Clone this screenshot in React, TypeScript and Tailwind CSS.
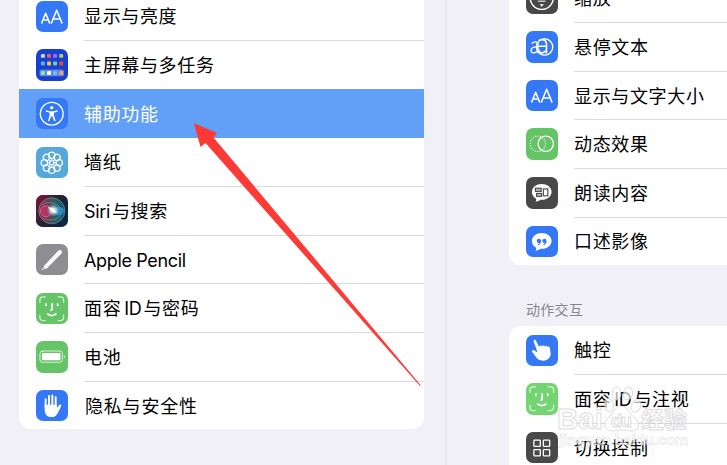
import type { ReactNode } from 'react';

const WHITE = { fill: 'none', stroke: '#fff', strokeLinecap: 'round', strokeLinejoin: 'round' } as const;

function Svg({ children }: { children: ReactNode }) {
  return <svg viewBox="0 0 32 32" className="size-full">{children}</svg>;
}

function TextSize() {
  return (
    <Svg>
      <path {...WHITE} strokeWidth="1.6" d="M5.8 22.4 9.8 12.6 13.8 22.4M7.1 19.3h5.4M15.7 22.4 21 9.4 26.3 22.4M17.4 18.3h7.2" />
    </Svg>
  );
}

function HomeScreen() {
  const rows = [
    ['#d8d5ce', '#ee5b6c', '#a768f5', '#a8d05a'],
    ['#55b7f5', '#f8c243', '#62d6a5', '#ee4b38'],
    ['#7ff08a', '#ffffff', '#5cc4fa', '#f2a25c'],
  ];
  const ys = [5, 12.7, 22.3];
  return (
    <Svg>
      <rect x="3.6" y="20.8" width="24.8" height="7" rx="2" fill="#6783e2" />
      {rows.map((row, r) =>
        row.map((c, i) => <rect key={c} x={5 + i * 6.2} y={ys[r]} width="4" height="4" rx="1" fill={c} />),
      )}
    </Svg>
  );
}

function Accessibility() {
  return (
    <Svg>
      <circle cx="16" cy="16" r="11.6" {...WHITE} strokeWidth="1.4" />
      <circle cx="16" cy="9.8" r="1.7" fill="#fff" />
      <path d="M10.2 12.4 14 13.4h4l3.8-1 .4 1.2-4 1.3v3l1.7 5.3-1.3.5-2.1-5.2h-1l-2.1 5.2-1.3-.5 1.7-5.3v-3l-4-1.3z" fill="#fff" />
    </Svg>
  );
}

function Wallpaper() {
  const petals = [0, 45, 90, 135, 180, 225, 270, 315];
  return (
    <Svg>
      {petals.map((a) => (
        <circle key={a} cx="16" cy="8.4" r="3.2" {...WHITE} strokeWidth="1.25" transform={`rotate(${a} 16 16)`} />
      ))}
      {petals.map((a) => (
        <path key={a} d="M16 11.8V14" {...WHITE} strokeWidth="1" transform={`rotate(${a} 16 16)`} />
      ))}
      <circle cx="16" cy="16" r="2.3" {...WHITE} strokeWidth="1" />
    </Svg>
  );
}

function Siri() {
  return (
    <Svg>
      <defs>
        <linearGradient id="siriBack" x1="0" y1="0.2" x2="1" y2="0.8">
          <stop offset="0" stopColor="#7a1438" />
          <stop offset=".45" stopColor="#252333" />
          <stop offset="1" stopColor="#0a2747" />
        </linearGradient>
        <linearGradient id="siriOrb" x1="0" y1="0.6" x2="1" y2="0.5">
          <stop offset="0" stopColor="#c02458" />
          <stop offset=".4" stopColor="#7a4a68" />
          <stop offset=".65" stopColor="#2f7478" />
          <stop offset="1" stopColor="#145c98" />
        </linearGradient>
        <radialGradient id="siriGlow">
          <stop offset="0" stopColor="#fff" />
          <stop offset=".3" stopColor="#e8ffff" stopOpacity=".85" />
          <stop offset="1" stopColor="#8ce9e8" stopOpacity="0" />
        </radialGradient>
      </defs>
      <rect width="32" height="32" fill="url(#siriBack)" />
      <circle cx="16" cy="16" r="13.2" fill="url(#siriOrb)" fillOpacity=".72" stroke="#52a58e" strokeOpacity=".8" strokeWidth="1" />
      <circle cx="10" cy="16.5" r="5.6" fill="#e4386f" fillOpacity=".5" stroke="#f0709a" strokeWidth=".7" />
      <path d="M16 16c4-5 10-5 12.5-1-1 7-7 8-12.5 1z" fill="#3a9fdd" opacity=".7" />
      <path d="M6 10c6-4 14-3 20 4M7 23c6 4 13 3 18-2" fill="none" stroke="#65c99d" strokeWidth=".7" opacity=".7" />
      <circle cx="17.5" cy="15.5" r="6.5" fill="url(#siriGlow)" />
      <path d="m12 12.5 5.5.8 3.5 4.7-5-1.2z" fill="#fff" />
    </Svg>
  );
}

function Pencil() {
  return (
    <Svg>
      <path d="M8.5 21.8 22.6 6.9c2-2 5 .7 3.1 2.9L11.2 24.7l-2.2.6-1.3-1.3z" fill="#fff" />
      <path d="m6.8 24.4 1.3 1.4-2.2.7z" fill="#fff" />
    </Svg>
  );
}

function FaceId() {
  return (
    <Svg>
      <path {...WHITE} opacity=".72" strokeWidth="1.3" d="M4 9.5V7q0-3 3-3h2.5M22.5 4H25q3 0 3 3v2.5M28 22.5V25q0 3-3 3h-2.5M9.5 28H7q-3 0-3-3v-2.5" />
      <path {...WHITE} strokeWidth="1.7" d="M10 11v1.7M22 11v1.7M16.4 11v5.3q0 1.3-1.3 1.3M11.8 21.3q4.2 3.2 8.4 0" />
    </Svg>
  );
}

function Battery() {
  return (
    <Svg>
      <rect x="4" y="10.2" width="22.8" height="11.4" rx="2.6" {...WHITE} opacity=".75" />
      <rect x="6" y="12.2" width="18.8" height="7.4" rx="1.1" fill="#fff" />
      <path d="M28.3 14.1q2.2 1.7 0 3.5z" fill="#fff" opacity=".8" />
    </Svg>
  );
}

function Hand() {
  return (
    <Svg>
      <path {...WHITE} strokeWidth="2" d="M9.8 9.4v9M13.2 6.2v11M16.6 5.5v11M20 7.4v11" />
      <path d="M8.8 15h12.2v3.5l2.4-3c1.2-1.3 2.7-.5 2.1.9l-3.6 7.4c-1.2 2.5-3.3 3.7-6.3 3.7-4.5 0-6.8-3.2-6.8-7.8z" fill="#fff" />
    </Svg>
  );
}

function ZoomFace() {
  return (
    <Svg>
      <circle cx="16" cy="16" r="11.8" {...WHITE} strokeWidth="1.5" />
      <circle cx="16" cy="15" r="3" {...WHITE} />
      <path d="m16 6 2 2.7h-4zM13.8 22.6h4.4L16 25.2zM7 16l2.7-2v4zM25 16l-2.7-2v4z" fill="#fff" />
      <path {...WHITE} d="M12.5 19.5h7" />
    </Svg>
  );
}

function HoverText() {
  return (
    <Svg>
      <circle cx="18.9" cy="16.2" r="8.3" {...WHITE} strokeWidth="1.4" />
      <path {...WHITE} strokeWidth="1.4" d="M6.2 12.5q3.5-3.1 6 .3v9M12 16.2c-8-.7-8.6 6-4.2 6 2.2 0 4.2-1.8 4.2-3.5" />
      <path {...WHITE} strokeWidth="1.6" d="M13.5 9.4q7.2-2 7.3 4v9M20.5 15.5h-7.2M20.5 19.3c-2 4-7.5 3.7-7.5 0" />
    </Svg>
  );
}

function Motion() {
  return (
    <Svg>
      <circle cx="12" cy="16" r="7.8" {...WHITE} strokeWidth="1.2" strokeDasharray="0.1 2.35" />
      <circle cx="20.1" cy="16" r="7.8" {...WHITE} strokeWidth="1.4" />
    </Svg>
  );
}

function Bubble() {
  return <path d="M16 7.2c5.6 0 10 3.5 10 8s-4.4 8-10 8h-1.3c-1.8 1.4-3.8 2-5.2 2 .7-.9 1-2 .8-3.2C7.7 20.6 6 18.2 6 15.2c0-4.5 4.4-8 10-8z" fill="#fff" />;
}

function SpokenContent() {
  return (
    <Svg>
      <Bubble />
      <g fill="#bbb" stroke="#484848" strokeWidth="1.15">
        <rect x="9.6" y="11.4" width="5.8" height="3.2" />
        <rect x="10.8" y="16.7" width="5" height="3" />
        <rect x="17.6" y="12.1" width="4.6" height="7" fill="#fff" />
      </g>
    </Svg>
  );
}

function AudioDescription() {
  return (
    <Svg>
      <Bubble />
      <path d="M15.3 15c0 2.9-1.4 4.2-3.2 4.5l-.2-.9c1-.3 1.5-.8 1.6-1.4a2.2 2.2 0 1 1 1.8-2.2zM20.9 15c0 2.9-1.4 4.2-3.2 4.5l-.2-.9c1-.3 1.5-.8 1.6-1.4a2.2 2.2 0 1 1 1.8-2.2z" fill="#3478f6" />
    </Svg>
  );
}

function Touch() {
  return (
    <Svg>
      <path d="M7.8 6.5c-.6-1.5 1.5-2.3 2.2-.9l3.4 6.6c.4-1.8 2.1-1.8 2.8-.5.6-1.6 2.3-1.4 2.9-.1.8-1.1 2.3-.8 2.7.6.9-.9 2.2-.3 2.4 1l.8 4.8c.5 4.2-2.7 7.8-7.2 8.1-3.4.2-5.8-1.2-7.5-3.4l-3.8-5.2c-1.2-1.7.5-2.8 2-1.7l3.3 2.1z" fill="#fff" />
    </Svg>
  );
}

function SwitchControl() {
  return (
    <Svg>
      {[[8, 8.2], [17.6, 8.2], [8, 17.8], [17.6, 17.8]].map(([x, y]) => (
        <rect key={`${x}-${y}`} x={x} y={y} width="6.5" height="6.5" rx=".8" {...WHITE} strokeWidth="1.3" />
      ))}
    </Svg>
  );
}

type Item = { label: ReactNode; icon: ReactNode; color: string; selected?: boolean };

const general: Item[] = [
  { label: '显示与亮度', icon: <TextSize />, color: 'bg-[#3478f6]' },
  { label: '主屏幕与多任务', icon: <HomeScreen />, color: 'bg-[#173fd0]' },
  { label: '辅助功能', icon: <Accessibility />, color: 'bg-[#3478f6]', selected: true },
  { label: '墙纸', icon: <Wallpaper />, color: 'bg-[#56a7da]' },
  { label: <><Latin>Siri</Latin><span className="ml-0.5">与搜索</span></>, icon: <Siri />, color: 'bg-[#252333]' },
  { label: <Latin>Apple Pencil</Latin>, icon: <Pencil />, color: 'bg-[#8e8d92]' },
  { label: <>面容<span className="ml-[3px] mr-0.5"><Latin>ID</Latin></span>与密码</>, icon: <FaceId />, color: 'bg-[#65c466]' },
  { label: '电池', icon: <Battery />, color: 'bg-[#65c466]' },
  { label: <span className="ml-px tracking-[0.8px]">隐私与安全性</span>, icon: <Hand />, color: 'bg-[#3478f6]' },
];

const vision: Item[] = [
  { label: '缩放', icon: <ZoomFace />, color: 'bg-[#484848]' },
  { label: '悬停文本', icon: <HoverText />, color: 'bg-[#3478f6]' },
  { label: '显示与文字大小', icon: <TextSize />, color: 'bg-[#3478f6]' },
  { label: '动态效果', icon: <Motion />, color: 'bg-[#65c466]' },
  { label: '朗读内容', icon: <SpokenContent />, color: 'bg-[#484848]' },
  { label: '口述影像', icon: <AudioDescription />, color: 'bg-[#3478f6]' },
];

const motor: Item[] = [
  { label: '触控', icon: <Touch />, color: 'bg-[#3478f6]' },
  { label: <>面容<span className="ml-[3px] mr-0.5"><Latin>ID</Latin></span>与注视</>, icon: <FaceId />, color: 'bg-[#72d572]' },
  { label: '切换控制', icon: <SwitchControl />, color: 'bg-[#484848]' },
];

function Latin({ children }: { children: string }) {
  return <span className="font-[Inter] text-[18px] tracking-[-0.35px]">{children}</span>;
}

function Row({ item, divided }: { item: Item; divided: boolean }) {
  return (
    <div className={`flex h-[48.65px] shrink-0 items-center pl-[17px] ${item.selected ? 'bg-[#629ff7] text-white' : ''}`}>
      <div className={`mt-px size-[31.5px] shrink-0 overflow-hidden rounded-[7px] ${item.color}`}>{item.icon}</div>
      <div className={`ml-[16.5px] flex h-full flex-1 items-center border-t pt-px whitespace-nowrap ${divided ? 'border-[#dadadc]' : 'border-transparent'}`}>
        <span>{item.label}</span>
      </div>
    </div>
  );
}

function Group({ items }: { items: Item[] }) {
  return (
    <>
      {items.map((item, i) => (
        <Row key={i} item={item} divided={i > 0 && !item.selected && !items[i - 1].selected} />
      ))}
    </>
  );
}

function Watermark() {
  return (
    <svg className="pointer-events-none absolute top-[384px] left-[550px] h-[70px] w-[150px]" viewBox="0 0 150 70">
      <g fill="#fff" fillOpacity=".68" stroke="#c4c4c7" strokeOpacity=".6" strokeWidth="1" className="font-[Liberation_Sans,Noto_Sans_CJK_SC,sans-serif] font-bold tracking-normal">
        <text x="7" y="45" fontSize="30" textLength="46" lengthAdjust="spacingAndGlyphs">Bai</text>
        <path d="M71 22c-6 0-7 7-12 11-7 5-5 14 3 14 4 0 6-1 9-1 4 0 7 1 11 1 7 0 9-9 3-13-6-4-7-12-14-12z" />
        <ellipse cx="59" cy="21" rx="4.5" ry="6.5" transform="rotate(-15 59 21)" />
        <ellipse cx="66.5" cy="9.5" rx="4.5" ry="6.5" />
        <ellipse cx="78" cy="9.5" rx="4.5" ry="6.5" transform="rotate(12 78 9.5)" />
        <ellipse cx="86" cy="22" rx="4.5" ry="6.5" transform="rotate(20 86 22)" />
        <text x="61" y="43" fontSize="18" textLength="21">du</text>
        <text x="91" y="44" fontSize="23" textLength="46">经验</text>
        <text x="9" y="60.500" fontSize="15" textLength="129" strokeWidth=".5">jingyan.baidu.com</text>
      </g>
    </svg>
  );
}

export default function App() {
  return (
    <div className="relative flex h-[465px] w-[727px] overflow-hidden bg-[#f1f0f6] font-[Inter,Noto_Sans_CJK_SC,sans-serif] text-[18px] tracking-[0.65px] text-black">
      <aside className="w-[447px] shrink-0 border-r-2 border-[#e8e7ec] pl-[19px]">
        <div className="-mt-[8.4px] w-[405px] overflow-hidden rounded-b-xl bg-white">
          <Group items={general} />
        </div>
      </aside>
      <main className="min-w-0 flex-1 pl-[62px]">
        <div className="-mt-[26.6px] rounded-bl-xl bg-white">
          <Group items={vision} />
        </div>
        <h2 className="flex h-[60.3px] items-center pt-[29px] pl-[17px] text-[14px] tracking-[0.3px] text-[#85858b]">动作交互</h2>
        <div className="rounded-tl-xl bg-white">
          <Group items={motor} />
        </div>
      </main>
      <svg className="pointer-events-none absolute top-[120px] left-[190px] h-[270px] w-[235px]" viewBox="190 120 235 270">
        <path d="M193.800 123 217 133 213.500 137.500 420.700 385.200 420 386 205.500 143 200.500 147z" fill="#fe3a37" />
      </svg>
      <Watermark />
    </div>
  );
}
